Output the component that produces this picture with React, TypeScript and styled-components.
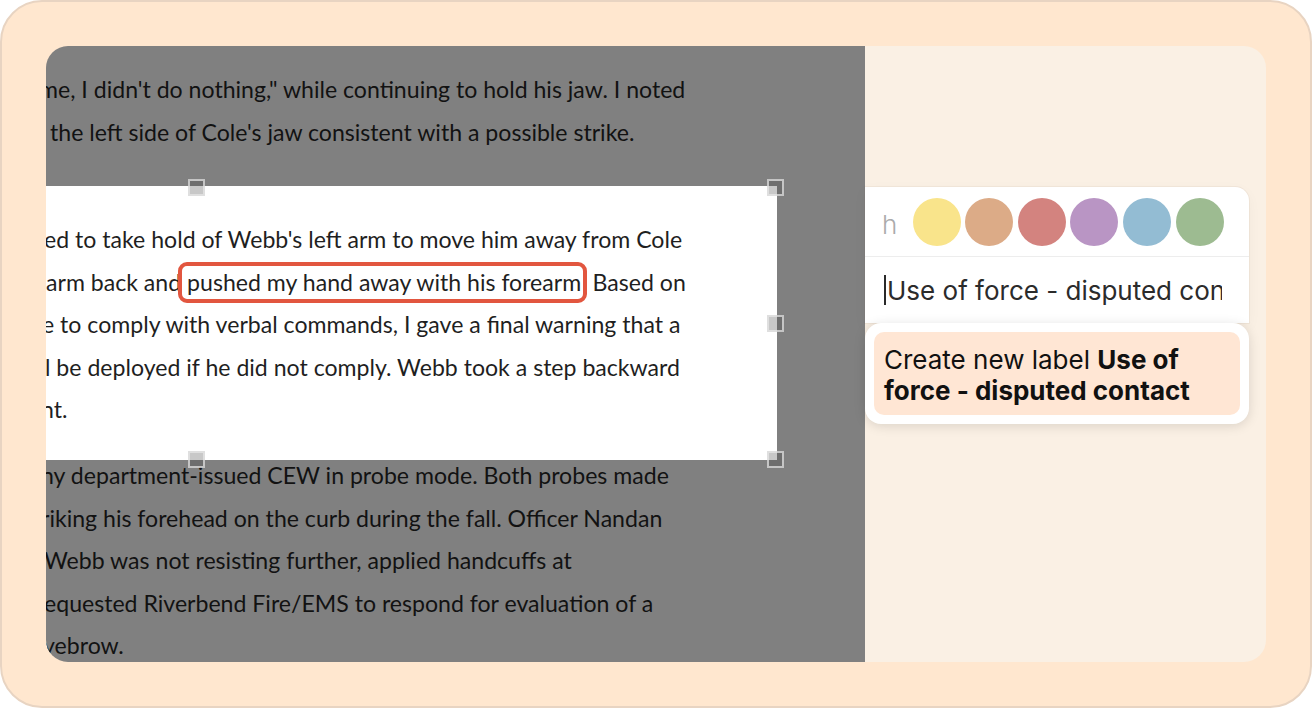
import React from "react";
import styled, { createGlobalStyle } from "styled-components";

const GlobalStyle = createGlobalStyle`
  html, body { margin: 0; padding: 0; background: #ffffff; }
  * { box-sizing: border-box; }
`;

const Frame = styled.div`
  width: 1312px;
  height: 708px;
  border: 2px solid #e8d4c2;
  border-radius: 42px;
  background: #ffe7cf;
  padding: 44px;
`;

const Card = styled.div`
  display: flex;
  height: 100%;
  border-radius: 22px;
  overflow: hidden;
`;

const DocPane = styled.div`
  width: 819px;
  flex: none;
  background: #808080;
  overflow: hidden;
  padding-top: 22px;
  font-family: Lato, "Liberation Sans", sans-serif;
  font-size: 23.1px;
`;

const Paragraph = styled.div<{ $lit?: boolean; $pull?: number }>`
  color: ${(p) => (p.$lit ? "#1f1f1f" : "#121212")};
  margin-top: ${(p) => p.$pull ?? 0}px;
  position: relative;
`;

const Line = styled.div<{ $shift?: number }>`
  height: 42.5px;
  line-height: 42.5px;
  white-space: nowrap;
  margin-left: ${(p) => p.$shift ?? 0}px;
`;

const CropBox = styled.div`
  position: relative;
  background: #ffffff;
  margin-top: 33px;
  padding: 32px 0 29.5px;
  width: 731px;
`;

const Handle = styled.span<{ $x: number; $y: number }>`
  position: absolute;
  left: ${(p) => p.$x - 8}px;
  top: ${(p) => p.$y - 8}px;
  width: 17px;
  height: 17px;
  background: rgba(65, 65, 65, 0.29);
  border: 2px solid rgba(231, 231, 231, 0.72);
  z-index: 2;
`;

const Marked = styled.span`
  position: relative;
  &::after {
    content: "";
    position: absolute;
    left: -9px;
    right: -6px;
    top: -6px;
    bottom: -7px;
    border: 4px solid #e2563f;
    border-radius: 9px;
    pointer-events: none;
    z-index: 1;
  }
`;

const Hidden = styled.span`
  color: transparent;
`;

const SidePane = styled.div`
  flex: none;
  width: 401px;
  min-width: 0;
  background: #faf0e4;
  padding: 141px 17px 0 0;
  display: flex;
  flex-direction: column;
  font-family: Inter, "Noto Sans", sans-serif;
`;

const LabelEditor = styled.div`
  background: #ffffff;
  border-radius: 0 14px 0 0;
  min-width: 0;
  box-shadow: 0 0 0 1px rgba(120, 90, 60, 0.06), 0 4px 14px rgba(0, 0, 0, 0.04);
`;

const SwatchRow = styled.div`
  display: flex;
  align-items: center;
  height: 70px;
  padding-left: 17px;
  border-bottom: 1px solid #ededed;
  gap: 4.6px;
`;

const HexTail = styled.span`
  color: #ababab;
  font-size: 26px;
  font-weight: 300;
  width: 26px;
  padding-top: 6px;
`;

const Swatch = styled.span<{ $color: string }>`
  width: 48px;
  height: 48px;
  border-radius: 50%;
  background: ${(p) => p.$color};
  flex: none;
`;

const NameField = styled.div`
  display: flex;
  align-items: center;
  height: 66px;
  padding: 0 27px 0 19px;
  overflow: hidden;
`;

const Caret = styled.span`
  width: 2px;
  height: 30px;
  background: #2a2a2a;
  flex: none;
  margin-right: 1px;
`;

const FieldText = styled.span`
  font-size: 26px;
  color: #2b2b2b;
  white-space: nowrap;
  overflow: hidden;
  min-width: 0;
`;

const Menu = styled.div`
  background: #ffffff;
  border-radius: 16px;
  padding: 9px;
  box-shadow: 0 2px 12px rgba(0, 0, 0, 0.13);
`;

const MenuItem = styled.div`
  background: #ffe6d4;
  border-radius: 10px;
  padding: 12px 10px 9px;
  font-size: 26px;
  line-height: 31px;
  color: #111111;
  b { font-weight: 700; }
`;

const swatches = ["#f9e48b", "#dcab87", "#d3837f", "#b995c4", "#93bcd3", "#9dbb91"];

export default function App() {
  return (
    <>
      <GlobalStyle />
      <Frame>
        <Card>
          <DocPane>
            <Paragraph>
              <Line $shift={-7}>me, I didn't do nothing," while continuing to hold his jaw. I noted</Line>
              <Line $shift={4}>the left side of Cole's jaw consistent with a possible strike.</Line>
            </Paragraph>
            <CropBox>
              <Handle $x={150} $y={1} />
              <Handle $x={729} $y={1} />
              <Handle $x={729} $y={137} />
              <Handle $x={150} $y={273} />
              <Handle $x={729} $y={273} />
              <Paragraph $lit>
                <Line $shift={-2}>ed to take hold of Webb's left arm to move him away from Cole</Line>
                <Line $shift={0}>
                  arm back and <Marked>pushed my hand away with his forearm</Marked>
                  <Hidden>.</Hidden> Based on
                </Line>
                <Line $shift={-4}>e to comply with verbal commands, I gave a final warning that a</Line>
                <Line $shift={-1}>l be deployed if he did not comply. Webb took a step backward</Line>
                <Line $shift={-5}>nt.</Line>
              </Paragraph>
            </CropBox>
            <Paragraph $pull={-6}>
              <Line $shift={-5}>ny department-issued CEW in probe mode. Both probes made</Line>
              <Line $shift={-5}>riking his forehead on the curb during the fall. Officer Nandan</Line>
              <Line $shift={-2}>Webb was not resisting further, applied handcuffs at</Line>
              <Line $shift={-2}>equested Riverbend Fire/EMS to respond for evaluation of a</Line>
              <Line $shift={-3}>yebrow.</Line>
            </Paragraph>
          </DocPane>
          <SidePane>
            <LabelEditor>
              <SwatchRow>
                <HexTail>h</HexTail>
                {swatches.map((c) => (
                  <Swatch key={c} $color={c} />
                ))}
              </SwatchRow>
              <NameField>
                <Caret />
                <FieldText>Use of force - disputed contact</FieldText>
              </NameField>
            </LabelEditor>
            <Menu>
              <MenuItem>
                Create new label <b>Use of force - disputed contact</b>
              </MenuItem>
            </Menu>
          </SidePane>
        </Card>
      </Frame>
    </>
  );
}
